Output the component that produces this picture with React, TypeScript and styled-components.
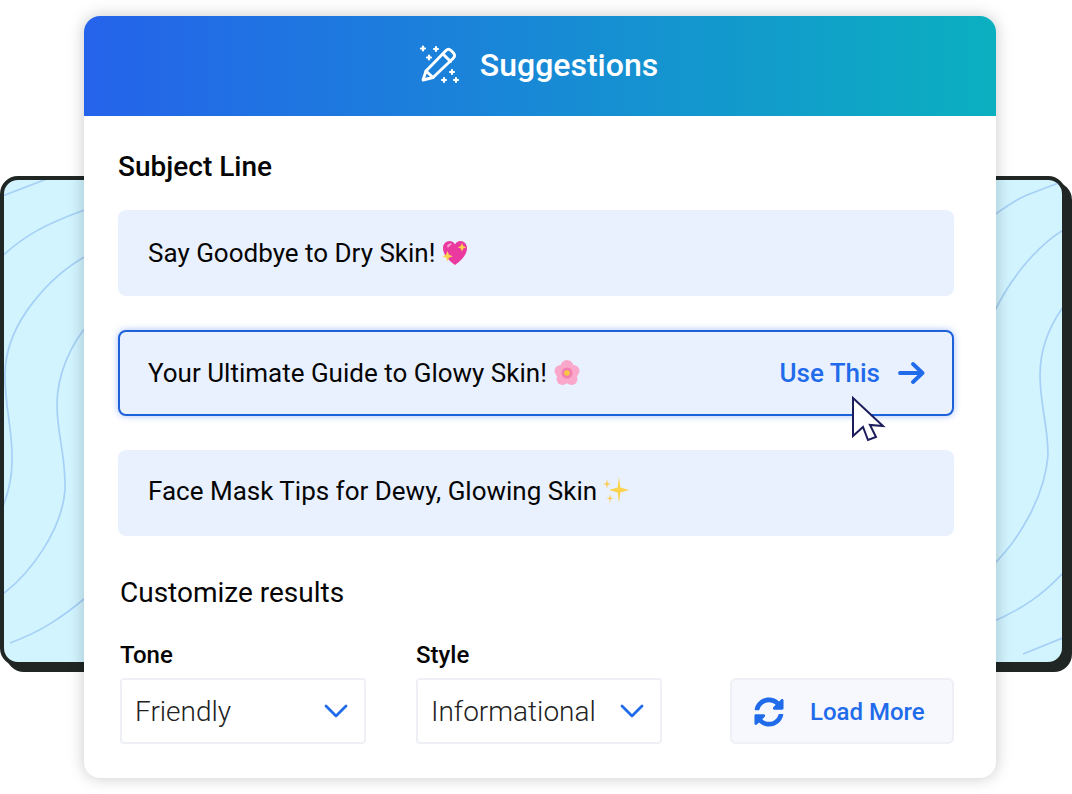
import styled, { createGlobalStyle } from "styled-components";
import { FaSyncAlt } from "react-icons/fa";

const GlobalStyle = createGlobalStyle`
  html, body {
    margin: 0;
    background: #fff;
  }
  body {
    font-family: Roboto, "Liberation Sans", sans-serif;
    color: #050505;
  }
`;

const Stage = styled.div`
  position: relative;
  width: 1072px;
  height: 794px;
  padding: 16px 0 0 84px;
  box-sizing: border-box;
  overflow: hidden;
`;

const Backdrop = styled.div`
  position: absolute;
  left: 0;
  top: 176px;
  width: 1066px;
  height: 490px;
  box-sizing: border-box;
  border: 4px solid #1f2624;
  border-radius: 18px;
  background: #d1f4ff;
  box-shadow: 6px 6px 0 #1f2624;
  overflow: hidden;
`;

const Contours = styled.svg`
  position: absolute;
  left: -4px;
  top: -180px;
`;

const Card = styled.div`
  position: relative;
  width: 912px;
  height: 762px;
  border-radius: 16px;
  background: #fff;
  box-shadow: 0 0 16px rgba(0, 0, 0, 0.22);
  overflow: hidden;
`;

const Header = styled.div`
  height: 100px;
  box-sizing: border-box;
  padding: 0 2px 2px 0;
  display: flex;
  align-items: center;
  justify-content: center;
  gap: 20px;
  background: linear-gradient(90deg, #2563eb 0%, #0bb0c0 100%);
  color: #fff;
  font-size: 32px;
  font-weight: 500;
`;

const Body = styled.div`
  padding: 35px 42px 0 34px;
`;

const Title = styled.div`
  font-size: 28px;
  line-height: 32px;
  font-weight: 500;
  margin-bottom: 27px;
`;

const Suggestions = styled.div`
  display: flex;
  flex-direction: column;
  gap: 34px;
`;

const Suggestion = styled.div<{ $active?: boolean; $raised?: boolean }>`
  position: relative;
  height: 86px;
  box-sizing: border-box;
  display: flex;
  align-items: center;
  gap: 6px;
  padding: 0 ${(p) => (p.$active ? 27 : 29)}px ${(p) => (p.$raised ? 4 : 0)}px ${(p) => (p.$active ? 28 : 30)}px;
  border-radius: 8px;
  background: #e9f1ff;
  font-size: 26px;
  border: ${(p) => (p.$active ? "2px solid #1d62d8" : "none")};
  box-shadow: ${(p) => (p.$active ? "0 0 7px rgba(37, 99, 235, 0.4)" : "none")};
`;

const UseThis = styled.div`
  margin-left: auto;
  display: flex;
  align-items: center;
  gap: 17px;
  color: #1f6bea;
  font-weight: 500;
`;

const Cursor = styled.svg`
  position: absolute;
  left: 730px;
  top: 64px;
`;

const Customize = styled.div`
  font-size: 28px;
  line-height: 32px;
  margin: 41px 0 0 2px;
`;

const Controls = styled.div`
  display: flex;
  align-items: flex-end;
  gap: 50px;
  margin: 33px 0 0 2px;
`;

const Field = styled.div`
  display: flex;
  flex-direction: column;
  gap: 10px;
`;

const Label = styled.div`
  font-size: 24px;
  line-height: 26px;
  font-weight: 500;
`;

const Select = styled.div`
  width: 246px;
  height: 66px;
  box-sizing: border-box;
  display: flex;
  align-items: center;
  justify-content: space-between;
  padding: 0 16px 0 13px;
  border: 2px solid #eef0f5;
  border-radius: 4px;
  font-size: 28px;
  font-weight: 300;
  color: #222;
`;

const LoadMore = styled.div`
  margin-left: auto;
  width: 224px;
  height: 66px;
  box-sizing: border-box;
  display: flex;
  align-items: center;
  gap: 26px;
  padding: 2px 0 0 22px;
  border: 2px solid #eef0f5;
  border-radius: 6px;
  background: #f6f8fd;
  color: #1f6bea;
  font-size: 24px;
  font-weight: 500;
`;

const WandIcon = () => (
  <svg width="40" height="40" viewBox="0 0 40 40" fill="none" stroke="#fff" strokeWidth="2.9" strokeLinecap="round" strokeLinejoin="round">
    <path d="M3 35l3-9L26 5.500c1.500-1.500 3.500-1.500 5 0l2.500 2.500c1.500 1.500 1.500 3.500 0 5L13 32.500 3 35z" />
    <path d="M6 26l7 6.500M23 9l7.500 7.500" />
    <path d="M3 1.500v4M1 3.500h4M16 2v4M14 4h4M9 10.500v4M7 12.500h4M32 25v4M30 27h4M24 33v4M22 35h4M36 33v4M34 35h4" strokeWidth="2.2" />
  </svg>
);

const Chevron = () => (
  <svg width="24" height="16" viewBox="0 0 24 16" fill="none" stroke="#1f6bea" strokeWidth="2.8" strokeLinecap="round" strokeLinejoin="round">
    <path d="M2 3l10 10L22 3" />
  </svg>
);

const Arrow = () => (
  <svg width="28" height="24" viewBox="0 0 28 24" fill="none" stroke="#1f6bea" strokeWidth="3.8" strokeLinecap="round" strokeLinejoin="round">
    <path d="M3 12h22M16 3l9.500 9-9.500 9" />
  </svg>
);

const HeartEmoji = () => (
  <svg width="28" height="28" viewBox="0 0 28 28">
    <path d="M14 26C6 20 2 15 2 9c0-4 3-7 6.500-7C11 2 13 3.500 14 5.500 15 3.500 17 2 19.500 2 23 2 26 5 26 9c0 6-4 11-12 17z" fill="#ea3a9f" />
    <path d="M6 7c1-2 3-3 5-2-1 1-3 2-4 4z" fill="#f7a3d2" />
    <path d="M21 4l1.200 3 3 1.200-3 1.200L21 12.500l-1.200-3.100-3-1.200 3-1.200zM6.500 12l1.500 3.800 3.800 1.500-3.800 1.500-1.500 3.800L5 18.800l-3.800-1.500L5 15.800z" fill="#fbd34d" />
  </svg>
);

const FlowerEmoji = () => (
  <svg width="28" height="28" viewBox="0 0 28 28">
    <g fill="#f9a8cb">
      <circle cx="14" cy="7.500" r="6.500" />
      <circle cx="7.500" cy="12" r="6" />
      <circle cx="20.500" cy="12" r="6" />
      <circle cx="9.500" cy="20" r="6" />
      <circle cx="18.500" cy="20" r="6" />
    </g>
    <circle cx="14" cy="14" r="5.500" fill="#f27fae" />
    <circle cx="14" cy="14" r="2.800" fill="#f6c744" />
  </svg>
);

const SparkleEmoji = () => (
  <svg width="26" height="28" viewBox="0 0 26 28" fill="#fbd34d">
    <path d="M16 0l1.400 10.600L26 13l-8.600 2.400L16 26l-1.400-10.600L6 13l8.600-2.400z" />
    <path d="M4 2l.8 4 3.200.9-3.200.9L4 12l-.8-4.200L0 6.900l3.200-.9zM7 17l.7 3.500 2.800.8-2.800.8L7 26l-.7-3.900-2.800-.8 2.800-.8z" fill="#fcc94a" />
  </svg>
);

export default function App() {
  return (
    <>
      <GlobalStyle />
      <Stage>
        <Backdrop>
          <Contours width="1072" height="794" viewBox="0 0 1072 794" fill="none" stroke="#a6d0f6" strokeWidth="1.7">
            <path d="M0 197L52 177" />
            <path d="M0 258C25 235 45 224 90 208" />
            <path d="M90 254C55 272 5 320 5 375C5 410 13 430 12 462C12 480 6 500 0 514" />
            <path d="M90 322C70 345 57 375 57 405C57 435 66 455 65 490C62 530 30 575 0 596" />
            <path d="M90 594C62 618 40 632 10 643" />
            <path d="M990 218C1005 207 1015 200 1027 195L1066 180" />
            <path d="M990 322C1005 285 1035 245 1070 226" />
            <path d="M1070 298C1052 320 1040 345 1040 375C1040 405 1048 425 1048 455C1045 495 1020 540 990 568" />
            <path d="M990 623C1020 610 1045 595 1070 565" />
            <path d="M1023 654L1070 635" />
          </Contours>
        </Backdrop>
        <Card>
          <Header>
            <WandIcon />
            Suggestions
          </Header>
          <Body>
            <Title>Subject Line</Title>
            <Suggestions>
              <Suggestion>
                Say Goodbye to Dry Skin! <HeartEmoji />
              </Suggestion>
              <Suggestion $active>
                Your Ultimate Guide to Glowy Skin! <FlowerEmoji />
                <UseThis>
                  Use This <Arrow />
                </UseThis>
                <Cursor width="36" height="48" viewBox="0 0 36 48">
                  <path d="M3 2V40L13 31 18 44 26 41 20 29 33 30z" fill="#fff" stroke="#1c1c5c" strokeWidth="2" strokeLinejoin="miter" />
                </Cursor>
              </Suggestion>
              <Suggestion $raised>
                Face Mask Tips for Dewy, Glowing Skin <SparkleEmoji />
              </Suggestion>
            </Suggestions>
            <Customize>Customize results</Customize>
            <Controls>
              <Field>
                <Label>Tone</Label>
                <Select>
                  Friendly <Chevron />
                </Select>
              </Field>
              <Field>
                <Label>Style</Label>
                <Select>
                  Informational <Chevron />
                </Select>
              </Field>
              <LoadMore>
                <FaSyncAlt size={30} />
                Load More
              </LoadMore>
            </Controls>
          </Body>
        </Card>
      </Stage>
    </>
  );
}
